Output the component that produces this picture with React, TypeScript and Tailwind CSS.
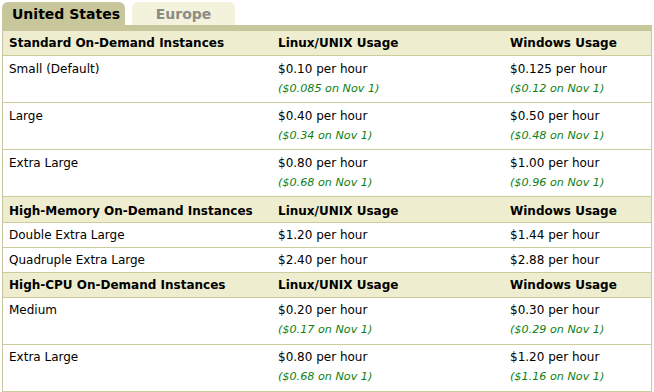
import React from 'react';

type Row = {
  name: string;
  linux: string;
  windows: string;
  linuxNov?: string;
  windowsNov?: string;
};

type Section = {
  title: string;
  headH: string;
  rowPt: string;
  rows: Row[];
};

const sections: Section[] = [
  {
    title: 'Standard On-Demand Instances',
    headH: 'h-[25px] pt-[4px]',
    rowPt: 'pt-[5px]',
    rows: [
      { name: 'Small (Default)', linux: '$0.10 per hour', linuxNov: '($0.085 on Nov 1)', windows: '$0.125 per hour', windowsNov: '($0.12 on Nov 1)' },
      { name: 'Large', linux: '$0.40 per hour', linuxNov: '($0.34 on Nov 1)', windows: '$0.50 per hour', windowsNov: '($0.48 on Nov 1)' },
      { name: 'Extra Large', linux: '$0.80 per hour', linuxNov: '($0.68 on Nov 1)', windows: '$1.00 per hour', windowsNov: '($0.96 on Nov 1)' },
    ],
  },
  {
    title: 'High-Memory On-Demand Instances',
    headH: 'h-[26px] pt-[6px]',
    rowPt: 'pt-[4px]',
    rows: [
      { name: 'Double Extra Large', linux: '$1.20 per hour', windows: '$1.44 per hour' },
      { name: 'Quadruple Extra Large', linux: '$2.40 per hour', windows: '$2.88 per hour' },
    ],
  },
  {
    title: 'High-CPU On-Demand Instances',
    headH: 'h-[25px] pt-[4px]',
    rowPt: 'pt-[4px]',
    rows: [
      { name: 'Medium', linux: '$0.20 per hour', linuxNov: '($0.17 on Nov 1)', windows: '$0.30 per hour', windowsNov: '($0.29 on Nov 1)' },
      { name: 'Extra Large', linux: '$0.80 per hour', linuxNov: '($0.68 on Nov 1)', windows: '$1.20 per hour', windowsNov: '($1.16 on Nov 1)' },
    ],
  },
];

const Price = ({ value, nov }: { value: string; nov?: string }) => (
  <div className="pl-[6px]">
    <div className="h-4 leading-4">{value}</div>
    {nov && (
      <div className="mt-[4px] h-4 leading-4 text-[11.2px] italic text-[#0f7f14]">{nov}</div>
    )}
  </div>
);

export default function App() {
  return (
    <div className="w-[654px] h-[392px] bg-white text-[12px] text-black whitespace-nowrap font-['DejaVu_Sans','Liberation_Sans',sans-serif]">
      {/* Tabs */}
      <div className="flex items-end pl-[2px] pt-[2px] h-[25px] gap-[7px]">
        <div className="h-[23px] w-[123px] rounded-t-[6px] bg-[#c8c79b] pl-[10px] text-[14px] font-bold leading-[25px]">
          United States
        </div>
        <div className="h-[23px] w-[103px] rounded-t-[6px] bg-[#f3f2dc] text-center text-[14px] font-bold leading-[25px] text-[#8d8b86]">
          Europe
        </div>
      </div>

      {/* Pricing table */}
      <div className="mx-[2px] w-[650px] border-t-[6px] border-x border-[#c8c79b]">
        {sections.map((s) => (
          <div key={s.title}>
            <div className={`box-border grid grid-cols-[269px_232px_1fr] border-b border-[#cdcc9c] bg-[#eeedd0] font-bold leading-4 ${s.headH}`}>
              <div className="pl-[6px]">{s.title}</div>
              <div className="pl-[6px]">Linux/UNIX Usage</div>
              <div className="pl-[6px]">Windows Usage</div>
            </div>
            {s.rows.map((r) => (
              <div
                key={s.title + r.name}
                className={`box-border grid grid-cols-[269px_232px_1fr] border-b border-[#cdcc9c] ${s.rowPt} ${r.linuxNov ? 'h-[47px]' : 'h-[25px]'}`}
              >
                <div className="pl-[6px] h-4 leading-4">{r.name}</div>
                <Price value={r.linux} nov={r.linuxNov} />
                <Price value={r.windows} nov={r.windowsNov} />
              </div>
            ))}
          </div>
        ))}
      </div>
    </div>
  );
}
